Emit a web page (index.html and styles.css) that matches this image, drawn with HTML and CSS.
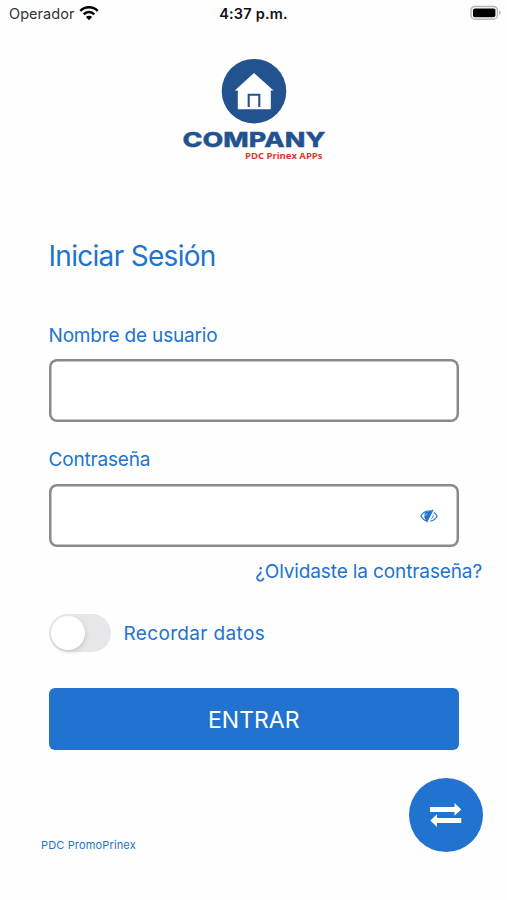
FILE: index.html
```html
<!DOCTYPE html>
<html lang="es">
<head>
<meta charset="utf-8">
<title>Iniciar Sesión</title>
<link rel="stylesheet" href="styles.css">
</head>
<body>
<div class="screen">
  <header class="status">
    <div class="carrier"><span class="carrier-name">Operador</span>
      <svg class="wifi" viewBox="0 0 20 16"><g fill="none" stroke="#000" stroke-width="2.5"><path d="M1.3 5.8a12.4 12.4 0 0 1 17.4 0"/><path d="M4.7 9.3a7.5 7.5 0 0 1 10.6 0"/></g><path d="M10 15.2 6.9 12a4.4 4.4 0 0 1 6.2 0z"/></svg>
    </div>
    <time class="clock">4:37 p.m.</time>
    <svg class="battery" viewBox="0 0 32 16"><rect x="1" y="1.4" width="26.4" height="12.8" rx="3.8" fill="#fff" stroke="#b8b8b8" stroke-width="1.5"/><rect x="3" y="3.4" width="22.4" height="8.8" rx="1.8"/><path d="M29 5.6q1.8 .6 1.8 2.2t-1.8 2.2z" fill="#b8b8b8"/></svg>
  </header>
  <svg class="logo" viewBox="0 0 160 120">
    <circle cx="80" cy="41.2" r="32.3" fill="#23538f"/>
    <path fill="#fff" d="M80 23 99.5 40.5H96.8V59.3H63.8V40.5H60.8z"/>
    <path d="M74.7 57V44.7H85.3V57" fill="none" stroke="#23538f" stroke-width="2.1"/>
    <text class="brand" x="8.5" y="97" textLength="143" lengthAdjust="spacingAndGlyphs">COMPANY</text>
    <text class="tagline" x="71" y="109.2" textLength="77.5" lengthAdjust="spacingAndGlyphs">PDC Prinex APPs</text>
  </svg>
  <main class="form">
    <h1 class="title">Iniciar Sesión</h1>
    <label class="label" for="user">Nombre de usuario</label>
    <div class="field"><input id="user" type="text"></div>
    <label class="label label-pass" for="pass">Contraseña</label>
    <div class="field"><input id="pass" type="password">
      <svg class="eye" viewBox="0 0 18 16"><path d="M6.5 12.8C4.2 12.2 2.2 10.6.9 8 2.7 4.7 5.5 3 9 3q1.1 0 2 .2M14 4.5Q16 5.8 17.1 8q-2.2 4.5-6.7 5.1" fill="none" stroke="#2173cf" stroke-width="1.2"/><path d="M4.8 4.5 12.5 2 6.8 13.5 4.1 9z" fill="#2173cf"/><path d="M4.6 8.3Q5.4 6 7.5 6" fill="none" stroke="#fff" stroke-width=".6"/><path d="M13 1.8 6.6 14.2" fill="none" stroke="#2173cf" stroke-width="1.2"/><path d="M13.2 6.8q.3 2.6-2 3.9" fill="none" stroke="#2173cf" stroke-width=".8"/></svg>
    </div>
    <a class="forgot">¿Olvidaste la contraseña?</a>
    <div class="remember"><span class="switch"><span class="knob"></span></span><span class="remember-text">Recordar datos</span></div>
    <button class="enter">ENTRAR</button>
  </main>
  <footer class="footer">
    <span class="app-name">PDC PromoPrinex</span>
    <button class="swap"><svg viewBox="0 0 32 24"><path fill="#fff" d="M0 4.1H24.5V.1L31.3 6.5 24.5 12.7V8.9H0zM31.3 15.1H7V11.3L.3 17.5 7 23.9V19.9H31.3z"/></svg></button>
  </footer>
</div>
</body>
</html>
```
FILE: styles.css
```css
* { box-sizing: border-box; }
body { margin: 0; background: #fefefe; font-family: Inter, "Liberation Sans", sans-serif; color: #2173cf; }
.screen { height: 900px; overflow: hidden; display: flex; flex-direction: column; }
.status { height: 28px; flex: none; display: grid; grid-template-columns: 1fr auto 1fr; align-items: center; padding: 0 5px 2px 9px; color: #111; }
.carrier { display: flex; align-items: center; gap: 5px; font-size: 14.5px; color: #333; }
.carrier-name { letter-spacing: .05px; }
.wifi { width: 20px; height: 16px; }
.clock { font-size: 14.5px; font-weight: 600; letter-spacing: .2px; margin-right: 4px; }
.battery { width: 32px; height: 16px; justify-self: end; }
.logo { width: 160px; height: 120px; flex: none; margin: 22px 0 0 174px; }
.brand { font: 800 20.5px/1 Inter, sans-serif; fill: #23538f; stroke: #23538f; stroke-width: .3px; }
.tagline { font: 700 9.5px/1 "Open Sans", sans-serif; fill: #db3a2a; }
.form { display: flex; flex-direction: column; padding: 66px 48px 0 48.5px; }
.title { margin: 0; font-size: 28px; line-height: 40px; font-weight: 400; letter-spacing: -.7px; }
.label { margin-top: 47px; font-size: 19px; line-height: 26px; letter-spacing: -.17px; }
.label-pass { margin-top: 25px; }
.field { height: 63px; margin-top: 10px; border-radius: 8px; box-shadow: inset 0 0 0 2.5px #8a8a8a; display: flex; align-items: center; padding-right: 21px; background: #fff; }
.label-pass + .field { margin-top: 11px; }
.field input { flex: 1; min-width: 0; height: 100%; border: 0; outline: 0; background: none; }
.eye { width: 18px; height: 16px; }
.forgot { align-self: flex-end; margin: 12px -23px 0 0; font-size: 19px; line-height: 26px; letter-spacing: -.12px; }
.remember { display: flex; align-items: center; gap: 13px; margin-top: 29px; height: 38px; font-size: 19px; letter-spacing: .35px; }
.switch { width: 62px; height: 38px; border-radius: 19px; background: #e7e7e9; padding: 2px; }
.knob { display: block; width: 34px; height: 34px; border-radius: 50%; background: #fff; box-shadow: 1px 2px 4px #0002; }
.enter { height: 62px; margin-top: 36px; border: 0; border-radius: 6px; background: #2173cf; color: #fff; font: 23px Inter, sans-serif; padding: 2px 0 0; }
.footer { display: flex; justify-content: space-between; padding: 27.5px 24.5px 0 41px; }
.app-name { margin-top: 60.5px; font-size: 11px; line-height: 14px; letter-spacing: .15px; }
.swap { width: 74px; height: 74px; border: 0; border-radius: 50%; background: #2173cf; padding: 0; display: grid; place-items: center; }
.swap svg { width: 32px; height: 24px; }
```
